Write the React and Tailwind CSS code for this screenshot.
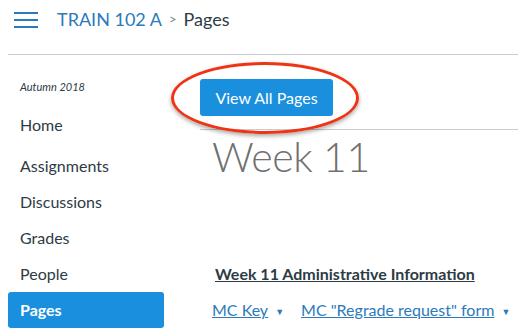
import React from 'react';

const navItems = ['Home', 'Assignments', 'Discussions', 'Grades', 'People', 'Pages'];

const Caret = () => (
    <span className="inline-block ml-[7px] text-[9px] align-middle text-[#2b7abc]">▼</span>
);

export default function App() {
    return (
        <div className="w-[518px] h-[334px] overflow-hidden bg-white text-[#2d3b45]" style={{fontFamily: 'Lato, "Open Sans", sans-serif'}}>
            <header className="ml-2 h-[55px] border-b border-[#c7cdd1] flex items-start">
                <div className="pl-[6px] pt-[12px]">
                    <svg width="24" height="16" viewBox="0 0 24 16">
                        <rect x="0" y="0" width="24" height="2" fill="#2b7abc" />
                        <rect x="0" y="7" width="24" height="2" fill="#2b7abc" />
                        <rect x="0" y="14" width="24" height="2" fill="#2b7abc" />
                    </svg>
                </div>
                <nav className="ml-[19px] pt-[7px] flex items-center text-[18px] leading-6">
                    <span className="text-[#2b7abc]">TRAIN 102 A</span>
                    <span className="mx-[7px] text-[13px] text-[#73818c]">&gt;</span>
                    <span>Pages</span>
                </nav>
            </header>

            <div className="flex">
                <aside className="ml-2 w-[156px] pt-[25px]">
                    <div className="pl-3 text-[11px] leading-[14px] italic">Autumn 2018</div>
                    <ul className="mt-[13px]">
                        {navItems.map((item, i) => (
                            <li
                                key={item}
                                className={
                                    'h-9 pl-3 flex items-center text-[16px] rounded-[3px] ' +
                                    (i === 0 ? 'mb-[5px] ' : '') +
                                    (item === 'Pages' ? 'bg-[#198fde] text-white font-bold' : '')
                                }
                            >
                                {item}
                            </li>
                        ))}
                    </ul>
                </aside>

                <main className="relative ml-[36px] flex-1">
                    <div className="absolute left-[-29px] top-[7px] w-[188px] h-[72px] rounded-[50%] border-[3px] border-[#ee3414] shadow-[0_2px_4px_rgba(0,0,0,0.35)]" />
                    <button className="mt-[24px] w-[133px] h-[37px] rounded-[3px] bg-[#198fde] text-white text-[16px]">
                        View All Pages
                    </button>
                    <div className="mt-[13px] border-t border-[#c7cdd1]" />
                    <h1 className="mt-[6px] pl-3 text-[41px] leading-none font-light tracking-[-0.4px] text-[#707070]">Week 11</h1>
                    <h2 className="mt-[87px] pl-[15px] text-[16px] leading-5 font-bold underline">
                        Week 11 Administrative Information
                    </h2>
                    <div className="mt-[16px] pl-3 text-[16px] leading-5 text-[#2b7abc] flex">
                        <span><span className="underline">MC Key</span><Caret /></span>
                        <span className="ml-[17px]"><span className="underline">MC "Regrade request" form</span><Caret /></span>
                    </div>
                </main>
            </div>
        </div>
    );
}
